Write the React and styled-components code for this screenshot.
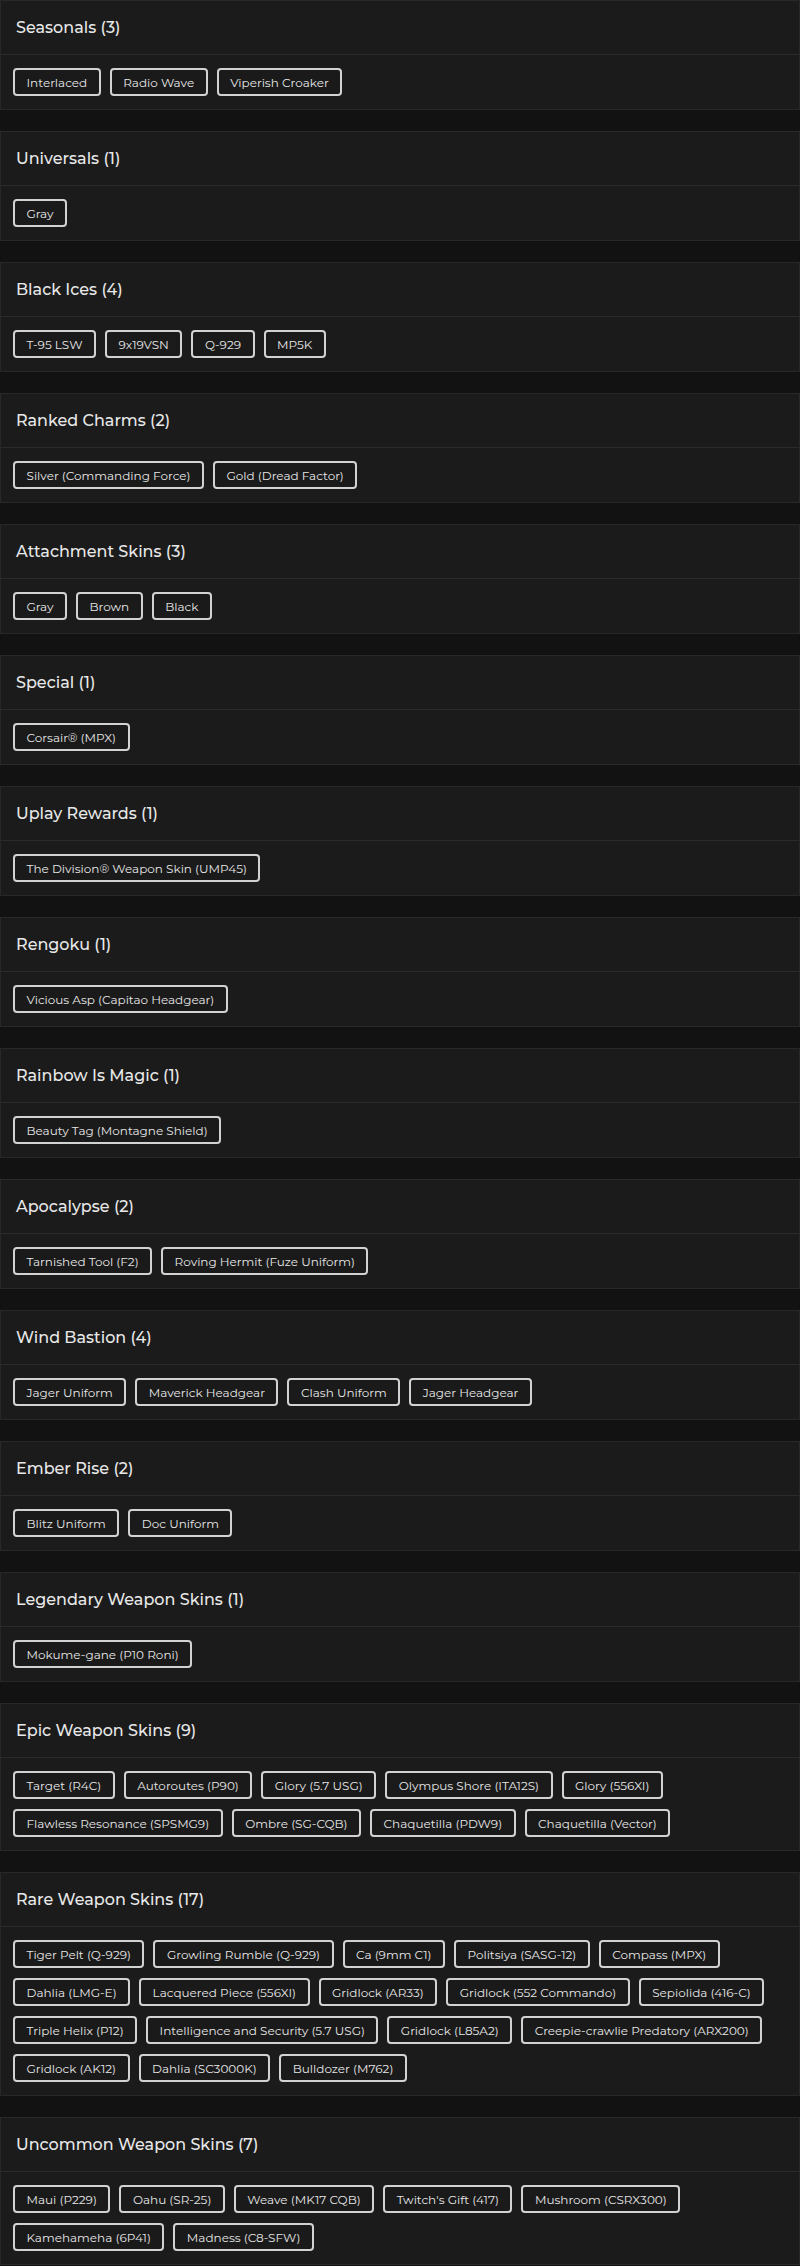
import React from 'react';
import styled, { createGlobalStyle } from 'styled-components';

const GlobalStyle = createGlobalStyle`
  html, body {
    margin: 0;
    padding: 0;
    background: #121212;
  }
  body {
    font-family: 'Montserrat', 'DejaVu Sans', 'Noto Sans', sans-serif;
    -webkit-font-smoothing: antialiased;
  }
`;

const sections = [
  { title: 'Seasonals', items: ['Interlaced', 'Radio Wave', 'Viperish Croaker'] },
  { title: 'Universals', items: ['Gray'] },
  { title: 'Black Ices', items: ['T-95 LSW', '9x19VSN', 'Q-929', 'MP5K'] },
  { title: 'Ranked Charms', items: ['Silver (Commanding Force)', 'Gold (Dread Factor)'] },
  { title: 'Attachment Skins', items: ['Gray', 'Brown', 'Black'] },
  { title: 'Special', items: ['Corsair® (MPX)'] },
  { title: 'Uplay Rewards', items: ['The Division® Weapon Skin (UMP45)'] },
  { title: 'Rengoku', items: ['Vicious Asp (Capitao Headgear)'] },
  { title: 'Rainbow Is Magic', items: ['Beauty Tag (Montagne Shield)'] },
  { title: 'Apocalypse', items: ['Tarnished Tool (F2)', 'Roving Hermit (Fuze Uniform)'] },
  {
    title: 'Wind Bastion',
    items: ['Jager Uniform', 'Maverick Headgear', 'Clash Uniform', 'Jager Headgear'],
  },
  { title: 'Ember Rise', items: ['Blitz Uniform', 'Doc Uniform'] },
  { title: 'Legendary Weapon Skins', items: ['Mokume-gane (P10 Roni)'] },
  {
    title: 'Epic Weapon Skins',
    items: [
      'Target (R4C)',
      'Autoroutes (P90)',
      'Glory (5.7 USG)',
      'Olympus Shore (ITA12S)',
      'Glory (556XI)',
      'Flawless Resonance (SPSMG9)',
      'Ombre (SG-CQB)',
      'Chaquetilla (PDW9)',
      'Chaquetilla (Vector)',
    ],
  },
  {
    title: 'Rare Weapon Skins',
    items: [
      'Tiger Pelt (Q-929)',
      'Growling Rumble (Q-929)',
      'Ca (9mm C1)',
      'Politsiya (SASG-12)',
      'Compass (MPX)',
      'Dahlia (LMG-E)',
      'Lacquered Piece (556XI)',
      'Gridlock (AR33)',
      'Gridlock (552 Commando)',
      'Sepiolida (416-C)',
      'Triple Helix (P12)',
      'Intelligence and Security (5.7 USG)',
      'Gridlock (L85A2)',
      'Creepie-crawlie Predatory (ARX200)',
      'Gridlock (AK12)',
      'Dahlia (SC3000K)',
      'Bulldozer (M762)',
    ],
  },
  {
    title: 'Uncommon Weapon Skins',
    items: [
      'Maui (P229)',
      'Oahu (SR-25)',
      'Weave (MK17 CQB)',
      "Twitch's Gift (417)",
      'Mushroom (CSRX300)',
      'Kamehameha (6P41)',
      'Madness (C8-SFW)',
    ],
  },
];

const Page = styled.div`
  display: flex;
  flex-direction: column;
  gap: 21px;
  padding-bottom: 5px;
`;

const Card = styled.section`
  background: #1b1b1b;
  border: 1px solid #282828;
`;

const CardHeader = styled.div`
  height: 53px;
  display: flex;
  align-items: center;
  padding: 0 15px;
  border-bottom: 1px solid #2b2b2b;
`;

const Title = styled.h3`
  margin: 0;
  font-size: 16px;
  font-weight: 500;
  color: #e8e8e8;
`;

const TagList = styled.div`
  display: flex;
  flex-wrap: wrap;
  gap: 10px 9px;
  padding: 13px 12px;
`;

const Tag = styled.span`
  display: inline-flex;
  align-items: center;
  height: 28px;
  box-sizing: border-box;
  padding: 0 11.5px;
  border: 2px solid #d2d2d2;
  border-radius: 4px;
  background: #1a1a1a;
  color: #e6e6e6;
  font-size: 12px;
  white-space: nowrap;
`;

const Section = ({ title, items }) => (
  <Card>
    <CardHeader>
      <Title>
        {title} ({items.length})
      </Title>
    </CardHeader>
    <TagList>
      {items.map((item, i) => (
        <Tag key={i}>{item}</Tag>
      ))}
    </TagList>
  </Card>
);

const App = () => (
  <>
    <GlobalStyle />
    <Page>
      {sections.map((s) => (
        <Section key={s.title} title={s.title} items={s.items} />
      ))}
    </Page>
  </>
);

export default App;
